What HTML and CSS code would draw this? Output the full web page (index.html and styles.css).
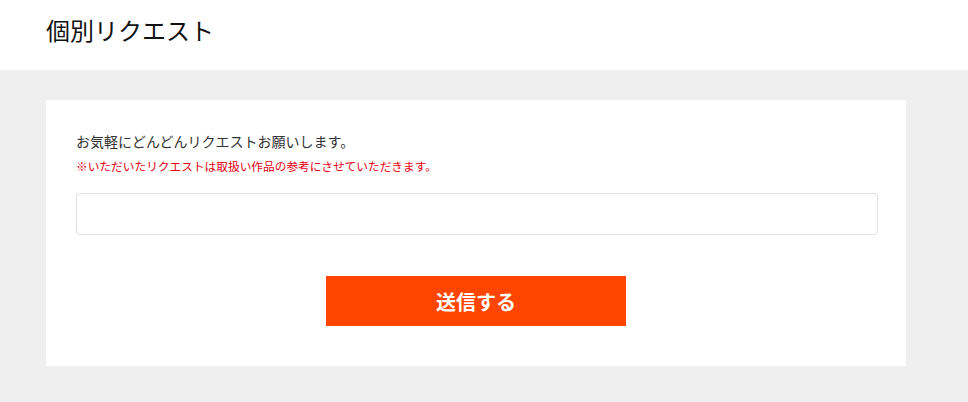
FILE: index.html
```html
<!DOCTYPE html>
<html>
<head>
	<meta charset="utf-8">
	<title>個別リクエスト</title>
	<link rel="stylesheet" href="styles.css">
</head>
<body>
	<div class="page-head">
		<h1 class="page-title">個別リクエスト</h1>
	</div>

	<div class="page-body">
		<form class="request-card">
			<p class="lead">お気軽にどんどんリクエストお願いします。</p>
			<p class="note">※いただいたリクエストは取扱い作品の参考にさせていただきます。</p>
			<input class="request-input" type="text">
			<div class="actions">
				<button class="submit" type="button">送信する</button>
			</div>
		</form>
	</div>
</body>
</html>
```

FILE: styles.css
```css
body {
	margin: 0;
	background-color: #efefef;
	font-family: "Noto Sans CJK JP", "Noto Sans", sans-serif;
	color: #333;
}
.page-head {
	background-color: #fff;
	height: 70px;
	padding: 0 46px;
	display: flex;
	align-items: center;
}
.page-title {
	margin: 0;
	font-size: 24px;
	font-weight: normal;
	color: #111;
	line-height: 1;
	padding-bottom: 10px;
}
.page-body {
	padding: 30px 62px 36px 46px;
}
.request-card {
	background-color: #fff;
	padding: 31px 28px 40px 30px;
}
.lead {
	margin: 0;
	font-size: 14px;
	line-height: 20px;
	color: #333;
}
.note {
	margin: 7px 0 0 0;
	font-size: 11.7px;
	line-height: 16px;
	color: #e60012;
}
.request-input {
	display: block;
	box-sizing: border-box;
	width: 100%;
	height: 42px;
	margin-top: 19px;
	border: 1px solid #e0e0e0;
	border-radius: 4px;
	background-color: #fff;
}
.actions {
	display: flex;
	justify-content: center;
	margin-top: 41px;
	margin-right: 2px;
}
.submit {
	width: 300px;
	height: 50px;
	border: none;
	background-color: #ff4500;
	color: #fff;
	font-family: inherit;
	font-size: 20px;
	font-weight: bold;
	cursor: pointer;
}
```
